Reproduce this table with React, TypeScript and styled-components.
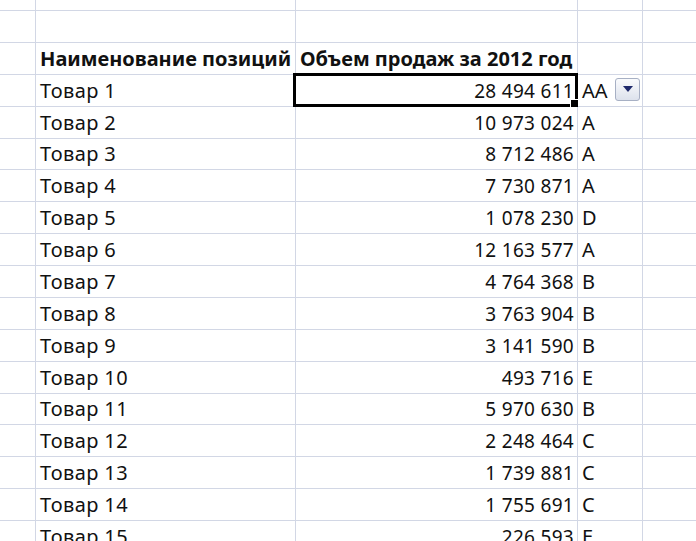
import React from "react";
import styled, { createGlobalStyle } from "styled-components";

const Global = createGlobalStyle`
  html, body { margin: 0; padding: 0; background: #fff; }
  body { width: 696px; height: 541px; overflow: hidden; }
`;

const GRID = "#d2d7e5";

const Sheet = styled.div`
  display: grid;
  grid-template-columns: 36px 260px 282px 65px 60px;
  grid-template-rows: 11px repeat(17, 31.875px);
  width: 696px;
  height: 541px;
  overflow: hidden;
  font-family: "Noto Sans", "Open Sans", sans-serif;
  font-size: 20px;
  color: #111;
`;

type Kind = "text" | "num" | "head" | "code";

const Cell = styled.div<{ $kind?: Kind; $noRight?: boolean }>`
  box-sizing: border-box;
  position: relative;
  border-bottom: 1px solid ${GRID};
  border-right: ${(p) => (p.$noRight ? "none" : `1px solid ${GRID}`)};
  display: flex;
  align-items: flex-end;
  justify-content: ${(p) => (p.$kind === "num" ? "flex-end" : "flex-start")};
  padding: ${(p) => (p.$kind === "num" ? "0 3px 2px 0" : "0 0 2px 4px")};
  font-weight: ${(p) => (p.$kind === "head" ? 700 : 400)};
  font-size: ${(p) => (p.$kind === "num" ? "19px" : "20px")};
  letter-spacing: ${(p) =>
    p.$kind === "text" ? "0.4px" : p.$kind === "num" ? "0.3px" : "0"};
  white-space: nowrap;
  line-height: 26px;
`;

const Selection = styled.div`
  position: absolute;
  left: -3px;
  top: -2px;
  right: -1px;
  bottom: -1px;
  border: 3px solid #000;
  pointer-events: none;
`;

const Handle = styled.div`
  position: absolute;
  right: -4px;
  bottom: -4px;
  width: 7px;
  height: 7px;
  background: #000;
  border: 1px solid #fff;
`;

const DropButton = styled.div`
  position: absolute;
  left: 37px;
  top: 3px;
  width: 25px;
  height: 23px;
  box-sizing: border-box;
  border: 1px solid #a7b0c4;
  border-radius: 3px;
  background: linear-gradient(#fafbfd, #dde2ec);
  display: flex;
  align-items: center;
  justify-content: center;
`;

const rows: [string, string, string][] = [
  ["Товар 1", "28 494 611", "AA"],
  ["Товар 2", "10 973 024", "A"],
  ["Товар 3", "8 712 486", "A"],
  ["Товар 4", "7 730 871", "A"],
  ["Товар 5", "1 078 230", "D"],
  ["Товар 6", "12 163 577", "A"],
  ["Товар 7", "4 764 368", "B"],
  ["Товар 8", "3 763 904", "B"],
  ["Товар 9", "3 141 590", "B"],
  ["Товар 10", "493 716", "E"],
  ["Товар 11", "5 970 630", "B"],
  ["Товар 12", "2 248 464", "C"],
  ["Товар 13", "1 739 881", "C"],
  ["Товар 14", "1 755 691", "C"],
  ["Товар 15", "226 593", "E"],
];

const Empty = () => (
  <>
    <Cell />
    <Cell />
    <Cell />
    <Cell />
    <Cell $noRight />
  </>
);

export default function App() {
  return (
    <>
      <Global />
      <Sheet>
        <Empty />
        <Empty />
        <Cell />
        <Cell $kind="head">Наименование позиций</Cell>
        <Cell $kind="head">Объем продаж за 2012 год</Cell>
        <Cell />
        <Cell $noRight />
        {rows.map(([name, value, cls], i) => (
          <React.Fragment key={name}>
            <Cell />
            <Cell $kind="text">{name}</Cell>
            <Cell $kind="num">
              {value}
              {i === 0 && (
                <Selection>
                  <Handle />
                </Selection>
              )}
            </Cell>
            <Cell $kind="code" style={i === 0 ? { zIndex: 2 } : undefined}>
              {cls}
              {i === 0 && (
                <DropButton>
                  <svg width="10" height="6" viewBox="0 0 10 6">
                    <path d="M0 0 H10 L5 6 Z" fill="#1f2a6b" />
                  </svg>
                </DropButton>
              )}
            </Cell>
            <Cell $noRight />
          </React.Fragment>
        ))}
      </Sheet>
    </>
  );
}
